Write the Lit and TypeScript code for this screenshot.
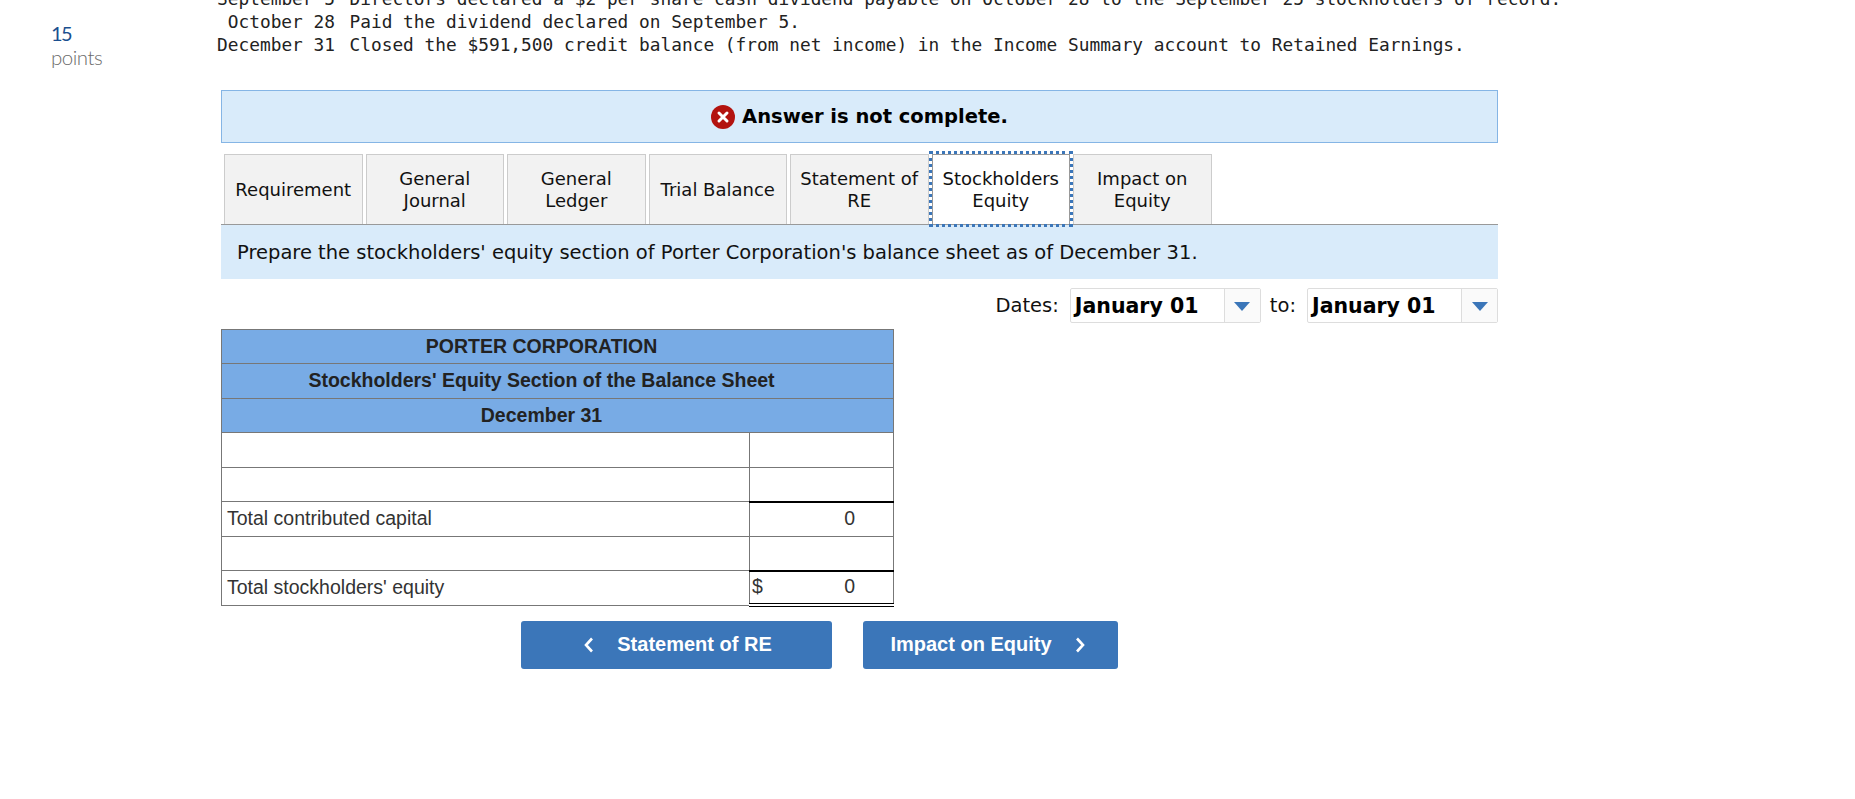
import { LitElement, html, css, svg } from "lit";
import { customElement } from "lit/decorators.js";

const caret = html`<svg class="caret" width="16" height="9" viewBox="0 0 16 9"><path d="M0 0H16L8 9Z" fill="#3b76b9"/></svg>`;
const xIcon = svg`<circle cx="12" cy="12" r="12" fill="#b3130f"/><path d="M8 8L16 16M16 8L8 16" stroke="#fff" stroke-width="3" stroke-linecap="round"/>`;

@customElement("app-root")
export class AppRoot extends LitElement {
  static styles = css`
    :host { display: block; height: 799px; overflow: hidden; background: #fff; font-family: "DejaVu Sans", sans-serif; color: #111; }
    .page { display: flex; align-items: flex-start; }
    .score { width: 221px; flex: none; padding: 21px 0 0 51px; box-sizing: border-box; font-family: Lato, sans-serif; }
    .num { font-size: 20px; line-height: 24px; color: #1a4f8f; letter-spacing: -1.5px; }
    .pts { font-size: 20.5px; line-height: 28px; margin-top: -2px; color: #6b6b6b; letter-spacing: -0.5px; font-weight: 300; }
    .main { width: 1277px; flex: none; }
    .prob { margin: -13.5px 0 0 -5px; font: 17.82px/23px "DejaVu Sans Mono", monospace; color: #222; white-space: pre; height: 70px; display: grid; grid-template-columns: 119px auto; grid-auto-rows: 23px; column-gap: 14.5px; justify-content: start; }
    .prob .d { text-align: right; }
    .banner { margin-top: 33px; height: 53px; box-sizing: border-box; padding-top: 1px; background: #d9ebfa; border: 1px solid #85b5e5; display: flex; align-items: center; justify-content: center; gap: 7px; font-weight: 700; font-size: 19.5px; color: #000; }
    .tabs { display: flex; gap: 3px; margin-top: 11px; padding-left: 3px; height: 71px; box-sizing: border-box; border-bottom: 1px solid #999; }
    .tab { width: 138.5px; height: 70px; box-sizing: border-box; background: #f2f2f2; border: 1px solid #ccc; border-bottom: 0; padding-top: 1px; display: flex; align-items: center; justify-content: center; text-align: center; font-size: 18px; line-height: 22px; color: #111; position: relative; }
    .tab.active { background: #fff; border-color: #999; outline: 3px dotted #3b76b9; outline-offset: 0; z-index: 1; }
    .prep { height: 54px; box-sizing: border-box; padding: 1px 0 0 16px; background: #d9ebfa; display: flex; align-items: center; font-size: 19.5px; color: #111; }
    .dates { display: flex; justify-content: flex-end; align-items: center; margin-top: 9px; font-size: 19.5px; }
    .dates .lab1 { margin-right: 11px; }
    .dates .lab2 { margin: 0 11px 0 9px; }
    .sel { width: 191px; height: 35px; box-sizing: border-box; border: 1px solid #ddd; border-radius: 2px; display: flex; font-weight: 700; font-size: 20.5px; color: #000; }
    .sel .val { flex: 1; padding: 1px 0 0 4px; display: flex; align-items: center; }
    .sel .btn { width: 36px; background: #fafafa; border-left: 1px solid #ddd; display: flex; align-items: center; justify-content: center; padding-top: 3px; box-sizing: border-box; }
    table { border-collapse: collapse; table-layout: fixed; width: 673px; margin-top: 6px; font-family: "Liberation Sans", sans-serif; font-size: 19.5px; color: #333; }
    td, th { border: 1px solid #777; height: 34.5px; padding: 0 5px; box-sizing: border-box; }
    th { background: #78abe5; font-weight: 700; color: #222; text-align: center; padding-right: 37px; }
    .c1 { width: 528px; }
    .amt { padding: 0 38px 1px 2px; }
    .amt .row { display: flex; justify-content: space-between; }
    .top { border-top: 2px solid #000; }
    .dbl { border-bottom: 4px double #000; }
    .nav { display: flex; gap: 30.5px; margin: 14px 0 0 300px; }
    .nb { height: 48px; border-radius: 3px; background: #3b76b9; color: #fff; font: 700 20px "Liberation Sans", sans-serif; display: flex; align-items: center; justify-content: center; gap: 23px; box-sizing: border-box; padding-bottom: 1px; }
    .b1 { width: 311px; padding-left: 3px; }
    .b2 { width: 255px; padding-right: 5px; }
  `;

  render() {
    const tabs = [["Requirement"], ["General", "Journal"], ["General", "Ledger"], ["Trial Balance"], ["Statement of", "RE"], ["Stockholders", "Equity"], ["Impact on", "Equity"]];
    const lines = [
      ["September 5", "Directors declared a $2 per share cash dividend payable on October 28 to the September 25 stockholders of record."],
      ["October 28", "Paid the dividend declared on September 5."],
      ["December 31", "Closed the $591,500 credit balance (from net income) in the Income Summary account to Retained Earnings."],
    ];
    return html`<div class="page">
      <div class="score"><div class="num">15</div><div class="pts">points</div></div>
      <div class="main">
        <div class="prob">${lines.map((l) => html`<span class="d">${l[0]}</span><span>${l[1]}</span>`)}</div>
        <div class="banner"><svg width="24" height="24" viewBox="0 0 24 24">${xIcon}</svg><span>Answer is not complete.</span></div>
        <div class="tabs">
          ${tabs.map((t, i) => html`<div class="tab ${i === 5 ? "active" : ""}"><span>${t[0]}${t[1] ? html`<br />${t[1]}` : ""}</span></div>`)}
        </div>
        <div class="prep">Prepare the stockholders' equity section of Porter Corporation's balance sheet as of December 31.</div>
        <div class="dates">
          <span class="lab1">Dates:</span>
          <div class="sel"><div class="val">January 01</div><div class="btn">${caret}</div></div>
          <span class="lab2">to:</span>
          <div class="sel"><div class="val">January 01</div><div class="btn">${caret}</div></div>
        </div>
        <table>
          <colgroup><col class="c1" /><col /></colgroup>
          <tr><th colspan="2">PORTER CORPORATION</th></tr>
          <tr><th colspan="2">Stockholders' Equity Section of the Balance Sheet</th></tr>
          <tr><th colspan="2">December 31</th></tr>
          <tr><td></td><td></td></tr>
          <tr><td></td><td></td></tr>
          <tr><td>Total contributed capital</td><td class="amt top"><div class="row"><span></span><span>0</span></div></td></tr>
          <tr><td></td><td></td></tr>
          <tr><td>Total stockholders' equity</td><td class="amt top dbl"><div class="row"><span>$</span><span>0</span></div></td></tr>
        </table>
        <div class="nav">
          <div class="nb b1"><svg width="10" height="16" viewBox="0 0 10 16"><path d="M8 1.5L2 8L8 14.5" fill="none" stroke="#fff" stroke-width="2.6"/></svg><span>Statement of RE</span></div>
          <div class="nb b2"><span>Impact on Equity</span><svg width="10" height="16" viewBox="0 0 10 16"><path d="M2 1.5L8 8L2 14.5" fill="none" stroke="#fff" stroke-width="2.6"/></svg></div>
        </div>
      </div>
    </div>`;
  }
}
